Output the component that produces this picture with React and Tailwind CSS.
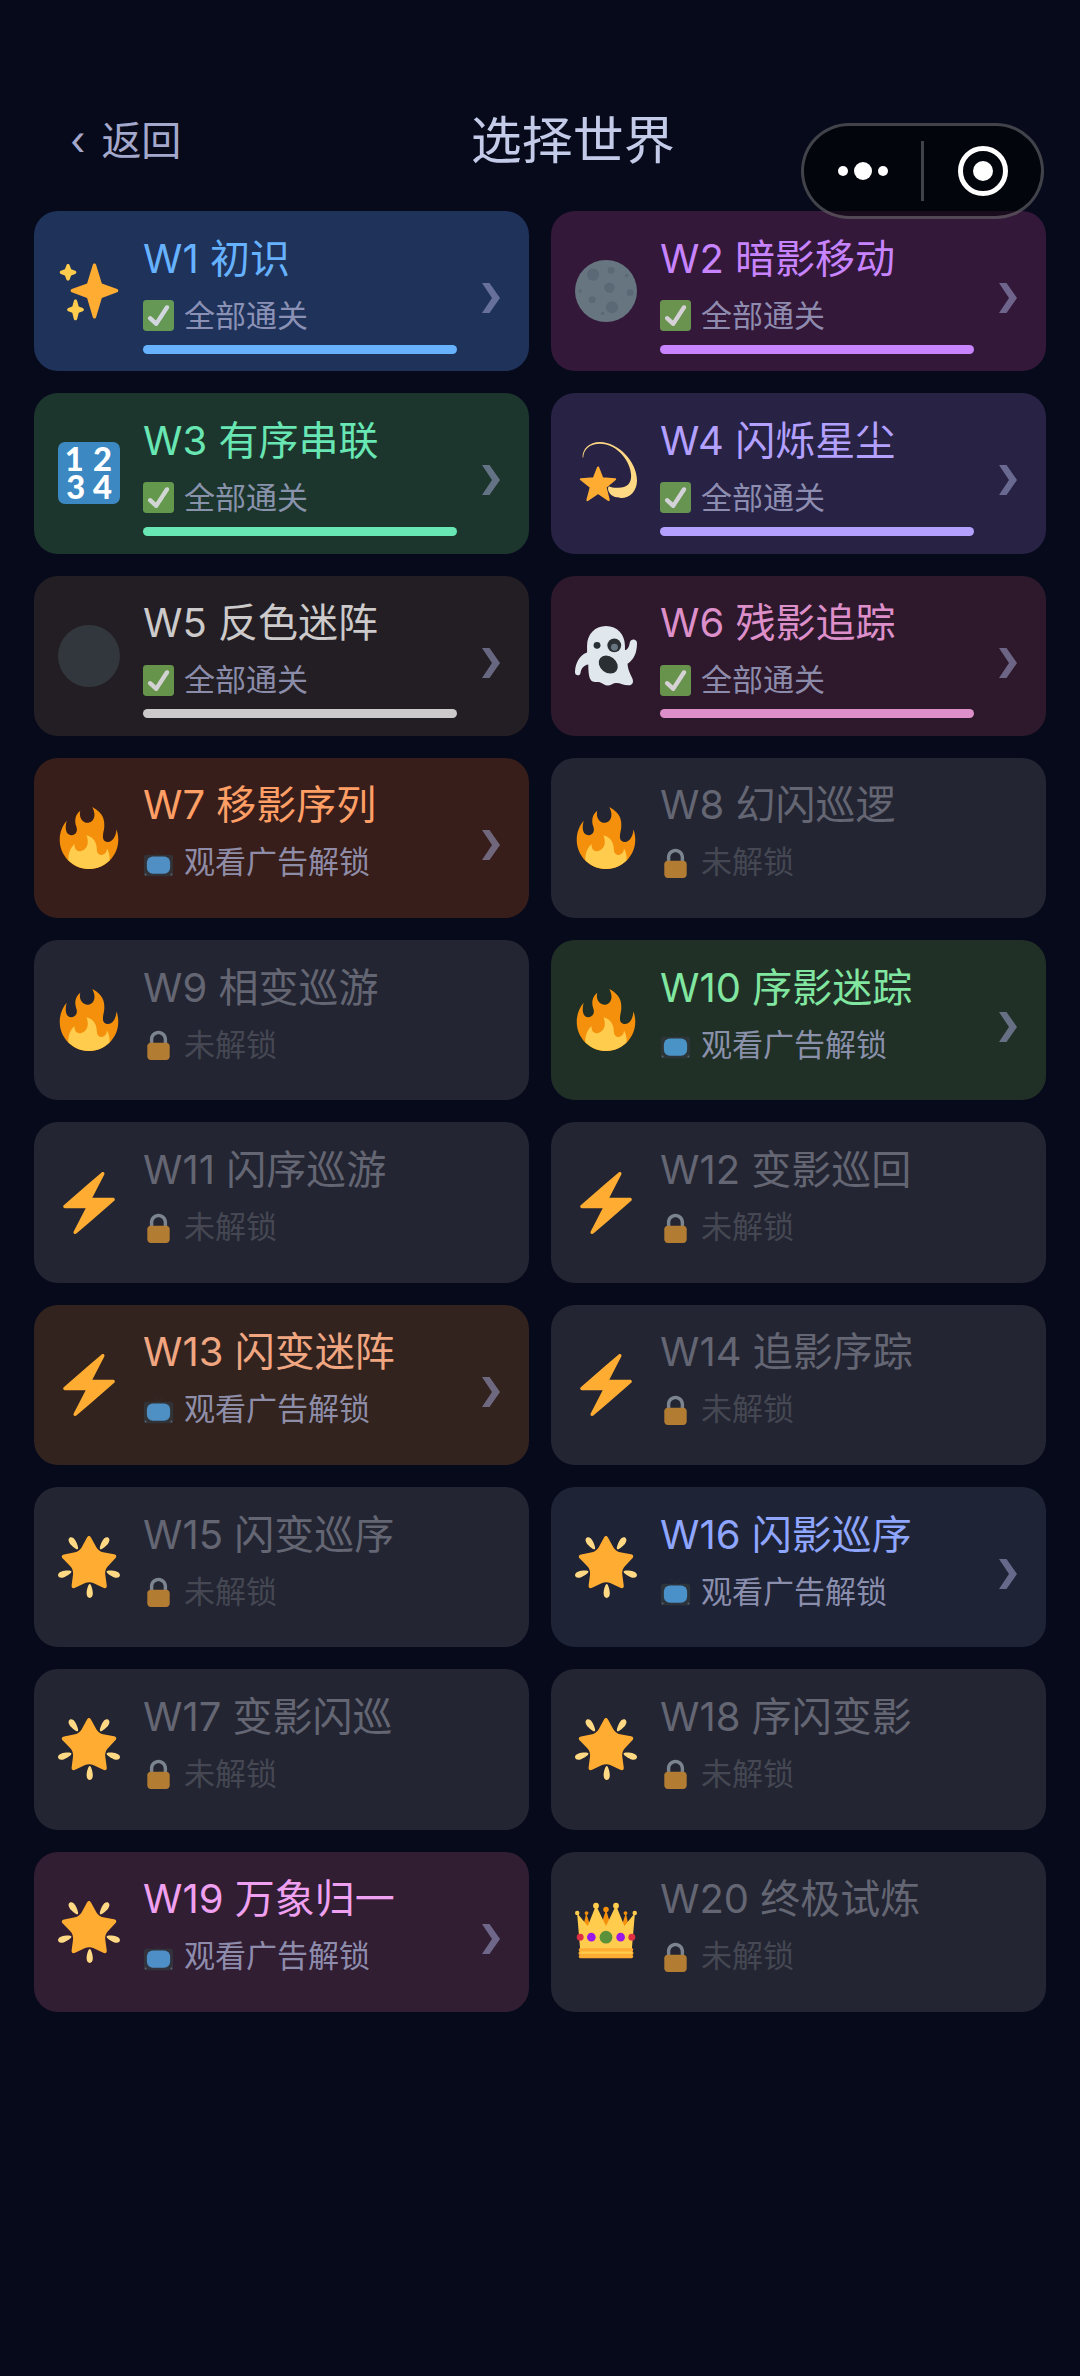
import React from 'react';

const worlds = [
  { id: 1, name: '初识', icon: 'sparkles', status: 'done', card: 'bg-[#1f325a]', title: 'text-[#66b2ff]', bar: 'bg-[#66b2ff]' },
  { id: 2, name: '暗影移动', icon: 'moon', status: 'done', card: 'bg-[#33183a]', title: 'text-[#c884ff]', bar: 'bg-[#c884ff]' },
  { id: 3, name: '有序串联', icon: 'numbers', status: 'done', card: 'bg-[#1c362d]', title: 'text-[#68e6b3]', bar: 'bg-[#68e6b3]' },
  { id: 4, name: '闪烁星尘', icon: 'dizzy', status: 'done', card: 'bg-[#282245]', title: 'text-[#b3a0ff]', bar: 'bg-[#b3a0ff]' },
  { id: 5, name: '反色迷阵', icon: 'dark', status: 'done', card: 'bg-[#231e23]', title: 'text-[#cccaca]', bar: 'bg-[#cccaca]' },
  { id: 6, name: '残影追踪', icon: 'ghost', status: 'done', card: 'bg-[#2e192c]', title: 'text-[#dd8fca]', bar: 'bg-[#dd8fca]' },
  { id: 7, name: '移影序列', icon: 'fire', status: 'ad', card: 'bg-[#371e1a]', title: 'text-[#ff9f66]' },
  { id: 8, name: '幻闪巡逻', icon: 'fire', status: 'locked' },
  { id: 9, name: '相变巡游', icon: 'fire', status: 'locked' },
  { id: 10, name: '序影迷踪', icon: 'fire', status: 'ad', card: 'bg-[#203027]', title: 'text-[#80e6a0]' },
  { id: 11, name: '闪序巡游', icon: 'bolt', status: 'locked' },
  { id: 12, name: '变影巡回', icon: 'bolt', status: 'locked' },
  { id: 13, name: '闪变迷阵', icon: 'bolt', status: 'ad', card: 'bg-[#32231f]', title: 'text-[#f0a680]' },
  { id: 14, name: '追影序踪', icon: 'bolt', status: 'locked' },
  { id: 15, name: '闪变巡序', icon: 'star', status: 'locked' },
  { id: 16, name: '闪影巡序', icon: 'star', status: 'ad', card: 'bg-[#1f2336]', title: 'text-[#8fa6ff]' },
  { id: 17, name: '变影闪巡', icon: 'star', status: 'locked' },
  { id: 18, name: '序闪变影', icon: 'star', status: 'locked' },
  { id: 19, name: '万象归一', icon: 'star', status: 'ad', card: 'bg-[#321e33]', title: 'text-[#f0a0f0]' },
  { id: 20, name: '终极试炼', icon: 'crown', status: 'locked' },
];

const statusText = {
  done: '全部通关',
  ad: '观看广告解锁',
  locked: '未解锁',
};

const icons = {
  sparkles: (
    <>
      <path fill="#FFAC33" d="M34.347 16.893l-8.899-3.294-3.323-10.891c-.128-.42-.517-.708-.956-.708-.439 0-.828.288-.956.708l-3.322 10.891-8.9 3.294c-.393.146-.653.519-.653.938 0 .418.26.793.653.938l8.895 3.293 3.324 11.223c.126.424.516.715.959.715.442 0 .833-.291.959-.716l3.324-11.223 8.896-3.293c.391-.144.652-.518.652-.937 0-.418-.261-.792-.653-.938z" />
      <path fill="#FFCC4D" d="M14.347 27.894l-2.314-.856-.9-3.3c-.118-.436-.513-.738-.964-.738-.451 0-.846.302-.965.737l-.9 3.3-2.313.856c-.393.146-.653.52-.653.938 0 .418.26.793.653.938l2.301.853.907 3.622c.112.444.511.756.97.756.459 0 .858-.312.97-.757l.907-3.622 2.301-.853c.393-.144.653-.519.653-.937 0-.418-.26-.793-.653-.937zM10.009 6.231l-2.364-.875-.876-2.365c-.145-.393-.519-.653-.938-.653-.418 0-.792.26-.938.653l-.875 2.365-2.365.875c-.393.146-.653.52-.653.938 0 .418.26.793.653.938l2.365.875.875 2.365c.146.393.52.653.938.653.418 0 .792-.26.938-.653l.875-2.365 2.365-.875c.393-.146.653-.52.653-.938 0-.418-.26-.792-.653-.938z" />
    </>
  ),
  moon: (
    <>
      <circle cx="18" cy="18" r="18" fill="#66757F" />
      <g fill="#5B6876">
        <circle cx="10.5" cy="8.5" r="3.5" />
        <circle cx="20" cy="16" r="3" />
        <circle cx="21.5" cy="27.5" r="3.5" />
        <circle cx="21" cy="6" r="2" />
        <circle cx="3" cy="18" r="1" />
        <circle cx="30" cy="9" r="1" />
        <circle cx="16" cy="31" r="1" />
        <circle cx="32" cy="19" r="2" />
        <circle cx="10" cy="23" r="2" />
      </g>
    </>
  ),
  numbers: (
    <>
      <rect width="36" height="36" rx="4" fill="#3B88C3" />
      <g fill="#fff" textAnchor="middle" fontSize="19" fontWeight="900" fontFamily="Lato, sans-serif">
        <text x="9.500" y="16.8">1</text>
        <text x="25.8" y="16.8">2</text>
        <text x="10.3" y="33.2">3</text>
        <text x="25.8" y="33.2">4</text>
      </g>
    </>
  ),
  dizzy: (
    <>
      <path fill="#FFAC33" stroke="#FFAC33" strokeWidth="1.2" strokeLinejoin="round" d="M13.4 14.8l2.5 6.3 7.4.5-5.6 4.6 1.9 7.5-6.2-4.1-6.2 4.1 2-7.5-5.8-4.6 7.500-.5z" />
      <path fill="#FFD983" d="M4.4 9C4.2 4 8.300 0 14.500 0 25 0 36 11.500 36 22.300c0 6-4 10.200-9.200 10.200-2.300 0-5-.9-6-2-1.600-1.700-2.100-3.800-1.100-4.800 1.500.8 3.300 1 5.500.9 4.900-.1 7.400-2.400 7.400-7C32.600 11.500 24.500 1 14.500 1 8.700 1 5 4 4.800 9z" />
    </>
  ),
  dark: <circle cx="18" cy="18" r="18" fill="#31373D" />,
  ghost: (
    <>
      <path fill="#E1E8ED" d="M18 .6C11.400.6 7 5.600 7 12v4C3.200 17.300.2 21.500 0 27.300c-.1 2.400 3 2.500 3.200.5.4-2.600 2-4.400 4.500-4.800.1 4.300.3 7.300 1.500 9 1.300 1.900 3.300.7 5.200 1.200 1.800.5 2.800 2 4.600 2s2.700-1.300 4.500-1.500c2.600-.3 4.700 1.400 7.600 1.300 2.400-.1 3.100-2 2.200-4-.9-2.200-2.500-4.300-2.800-8.500 3.500-2.100 5.500-6 5.500-12 0-2.700-3.800-2.800-4.200-.2-.3 2.300-1.200 4-2.800 4.400V12C29 5.600 24.600.6 18 .6z" />
      <circle cx="12.800" cy="11.800" r="2" fill="#292F33" />
      <circle cx="22.800" cy="11.800" r="4" fill="#292F33" />
      <circle cx="22.900" cy="12.900" r="2" fill="#66757F" />
      <ellipse cx="19.300" cy="23" rx="6" ry="4.700" transform="rotate(38 19.300 23)" fill="#292F33" />
    </>
  ),
  fire: (
    <>
      <path fill="#F4900C" d="M35 19c0-2.062-.367-4.039-1.04-5.868-.46 5.389-3.333 8.157-6.335 6.868-2.812-1.208-.917-5.917-.777-8.164.236-3.809-.012-8.169-6.931-11.794 2.875 5.5.333 8.917-2.333 9.125-2.958.231-5.667-2.542-4.667-7.042-3.238 2.386-3.332 6.402-2.333 9 1.042 2.708-.042 4.958-2.583 5.208-2.84.28-4.418-3.041-2.963-8.333C2.52 10.965 1 14.805 1 19c0 9.389 7.611 17 17 17s17-7.611 17-17z" />
      <path fill="#FFCC4D" d="M28.394 23.999c.148 3.084-2.561 4.293-4.019 3.709-2.106-.843-1.541-2.291-2.083-5.291s-2.625-5.083-5.708-6c2.25 6.333-1.247 8.667-3.08 9.084-1.872.426-3.753-.001-3.968-4.007C7.352 23.668 6 26.676 6 30c0 .368.023.73.055 1.09C9.125 34.124 13.342 36 18 36s8.875-1.876 11.945-4.91c.032-.36.055-.722.055-1.09 0-2.187-.584-4.236-1.606-6.001z" />
    </>
  ),
  bolt: (
    <path fill="#FFAC33" d="M32.938 15.651C32.792 15.26 32.418 15 32 15H19.925L26.89 1.458c.219-.426.106-.947-.271-1.243C26.437.071 26.218 0 26 0c-.233 0-.466.082-.653.243L18 6.588 3.347 19.243c-.316.273-.43.714-.284 1.105S3.582 21 4 21h12.075L9.11 34.542c-.219.426-.106.947.271 1.243.182.144.401.215.619.215.233 0 .466-.082.653-.243L18 29.412l14.653-12.655c.317-.273.43-.714.285-1.106z" />
  ),
  star: (
    <>
      <path fill="#FFAC33" d="M28.84 17.638c-.987 1.044-1.633 3.067-1.438 4.493l.892 6.441c.197 1.427-.701 2.087-1.996 1.469l-5.851-2.796c-1.295-.62-3.408-.611-4.7.018l-5.826 2.842c-1.291.629-2.193-.026-2.007-1.452l.843-6.449c.186-1.427-.475-3.444-1.47-4.481l-4.494-4.688c-.996-1.037-.655-2.102.755-2.365l6.37-1.188c1.41-.263 3.116-1.518 3.793-2.789L16.762.956c.675-1.271 1.789-1.274 2.473-.009L22.33 6.66c.686 1.265 2.4 2.507 3.814 2.758l6.378 1.141c1.412.252 1.761 1.314.774 2.359l-4.456 4.72z" />
      <path fill="#FFD983" d="M9.783 2.181c1.023 1.413 2.446 4.917 1.717 5.447-.728.531-3.607-1.91-4.63-3.323-1.022-1.413-.935-2.668-.131-3.254.804-.587 2.02-.282 3.044 1.13zm19.348 2.124C28.109 5.718 25.23 8.16 24.5 7.627c-.729-.53.695-4.033 1.719-5.445C27.242.768 28.457.463 29.262 1.051c.803.586.89 1.841-.131 3.254zM16.625 33.291c-.001-1.746.898-5.421 1.801-5.421.897 0 1.798 3.675 1.797 5.42 0 1.747-.804 2.712-1.8 2.71-.994.002-1.798-.962-1.798-2.709zm16.179-9.262c-1.655-.539-4.858-2.533-4.579-3.395.277-.858 4.037-.581 5.69-.041 1.655.54 2.321 1.605 2.013 2.556-.308.95-1.469 1.42-3.124.88zM2.083 20.594c1.655-.54 5.414-.817 5.694.044.276.857-2.928 2.854-4.581 3.392-1.654.54-2.818.07-3.123-.88-.308-.95.354-2.015 2.01-2.556z" />
    </>
  ),
  crown: (
    <>
      <g fill="#F4900C">
        <path d="M6.500 7l3.500 11H4zM18 5l4 13h-8zM29.500 7L32 18h-6z" />
        <circle cx="6.700" cy="7" r="1.100" />
        <circle cx="18" cy="5" r="1.600" />
        <circle cx="29.300" cy="7" r="1.100" />
      </g>
      <path fill="#FFCC4D" d="M1.200 7l6.200 7.500L12.200 2.500 18 14.500l5.800-12 4.900 12L34.800 7l-1.800 21H3z" />
      <g fill="#FFCC4D">
        <circle cx="1.300" cy="7" r="1.300" />
        <circle cx="12.200" cy="2.700" r="1.700" />
        <circle cx="23.800" cy="2.700" r="1.700" />
        <circle cx="34.700" cy="7" r="1.300" />
      </g>
      <path fill="#FFAC33" d="M3 27.500h30c.8 0 1.200 1.200.3 1.700.9.500.9 1.700 0 2.200.9.500.5 1.800-.3 1.800H3c-.8 0-1.200-1.300-.3-1.800-.9-.5-.9-1.700 0-2.200-.9-.5-.5-1.700.3-1.700z" />
      <path fill="#FFCC4D" d="M3 29.300h30.300v1.300H3z" />
      <circle cx="3" cy="21" r="2" fill="#DD2E44" />
      <circle cx="33" cy="21" r="2" fill="#DD2E44" />
      <circle cx="9.500" cy="21" r="2.500" fill="#9B17E8" />
      <circle cx="26.500" cy="21" r="2.500" fill="#9B17E8" />
      <circle cx="18" cy="21" r="3.700" fill="#5C913B" />
    </>
  ),
  done: (
    <>
      <rect width="36" height="36" rx="4" fill="#77B255" />
      <path fill="#fff" d="M29.28 6.362c-1.156-.751-2.704-.422-3.458.736L14.936 23.877l-5.029-4.65c-1.014-.938-2.596-.875-3.533.138-.937 1.014-.875 2.596.139 3.533l7.209 6.666c.48.445 1.09.665 1.696.665.673 0 1.534-.282 2.099-1.139.332-.506 12.5-19.27 12.5-19.27.751-1.159.421-2.707-.737-3.458z" />
    </>
  ),
  ad: (
    <>
      <path fill="none" stroke="#31373D" strokeWidth=".8" d="M12 3l6 6 6-6" />
      <rect x="1" y="9" width="34" height="25" rx="3" fill="#31373D" />
      <rect x="4.500" y="11" width="27" height="20" rx="7" fill="#55ACEE" />
      <circle cx="3" cy="32" r="1.100" fill="#66757F" />
      <circle cx="33" cy="32" r="1.100" fill="#66757F" />
    </>
  ),
  locked: (
    <>
      <path fill="#AAB8C2" d="M18 2C12.477 2 8 6.477 8 12v10h4V12c0-3.313 2.686-6 6-6s6 2.687 6 6v10h4V12c0-5.523-4.477-10-10-10z" />
      <path fill="#FFAC33" d="M31 32c0 2.209-1.791 4-4 4H9c-2.209 0-4-1.791-4-4V20c0-2.209 1.791-4 4-4h18c2.209 0 4 1.791 4 4v12z" />
    </>
  ),
};

const Icon = ({ name, className }) => (
  <svg viewBox="0 0 36 36" className={`overflow-visible ${className}`} aria-hidden="true">
    {icons[name]}
  </svg>
);

const WorldCard = ({ world }) => {
  const locked = world.status === 'locked';

  return (
    <button
      type="button"
      disabled={locked}
      className={`flex aspect-[105/34] w-full items-center rounded-3xl pl-6 pr-[29px] text-left ${locked ? 'bg-[#232532]' : world.card}`}
    >
      <Icon name={world.icon} className="mr-[23px] size-[62px] shrink-0" />

      <div className="min-w-0 flex-1">
        <h2 className={`text-[40px] leading-[60px] whitespace-nowrap ${locked ? 'text-[#646673]' : world.title}`}>
          W{world.id} {world.name}
        </h2>
        <p className={`mt-[6px] flex items-center gap-[10px] text-[31px] leading-[42px] whitespace-nowrap ${locked ? 'text-[#454853]' : 'text-[#a8accf]/80'}`}>
          <Icon name={world.status} className={`size-[31px] shrink-0 ${locked ? 'opacity-65' : 'opacity-80'}`} />
          {statusText[world.status]}
        </p>
        <div className={`mt-2 h-[9px] rounded-full ${world.bar || ''}`} />
      </div>

      {/* Only worlds that can be opened get an arrow */}
      <div className="ml-[25px] w-[18px] shrink-0 pt-[14px]">
        {!locked && (
          <svg viewBox="0 0 18 30" className="w-full fill-[#a0a4d0]/55" aria-hidden="true">
            <path d="M0 0h7.500L18 15 7.500 30H0l10-15z" />
          </svg>
        )}
      </div>
    </button>
  );
};

const App = () => {
  return (
    <div className="relative min-h-screen bg-[#060a1b] px-[34px] pb-16 font-['Inter','Noto_Sans_CJK_SC',sans-serif]">
      <header className="flex h-[211px] items-center pt-[70px]">
        <button type="button" className="flex gap-4 px-9 text-[40px] leading-[56px] text-[#a4a8cc]">
          <span>‹</span>
          <span>返回</span>
        </button>
        <h1 className="flex-1 text-center text-[51px] leading-[64px] text-[#c4cbe8]">选择世界</h1>
        <div className="w-[118px]" />
      </header>

      <main className="grid grid-cols-2 gap-[22px]">
        {worlds.map((world) => (
          <WorldCard key={world.id} world={world} />
        ))}
      </main>

      {/* Mini program capsule */}
      <div className="absolute top-[123px] right-9 flex h-24 w-[243px] items-center rounded-full border-[3px] border-white/25 bg-black/50">
        <button type="button" aria-label="更多" className="flex h-full flex-1 items-center justify-center">
          <svg viewBox="0 0 52 20" className="w-[52px] fill-white">
            <circle cx="6" cy="10" r="5" />
            <circle cx="26" cy="10" r="9" />
            <circle cx="46" cy="10" r="5" />
          </svg>
        </button>
        <div className="h-[60px] w-[3px] bg-white/25" />
        <button type="button" aria-label="关闭" className="flex h-full flex-1 items-center justify-center">
          <svg viewBox="0 0 50 50" className="w-[50px]">
            <circle cx="25" cy="25" r="22.500" fill="none" stroke="#fff" strokeWidth="5" />
            <circle cx="25" cy="25" r="10" fill="#fff" />
          </svg>
        </button>
      </div>
    </div>
  );
};

export default App;
